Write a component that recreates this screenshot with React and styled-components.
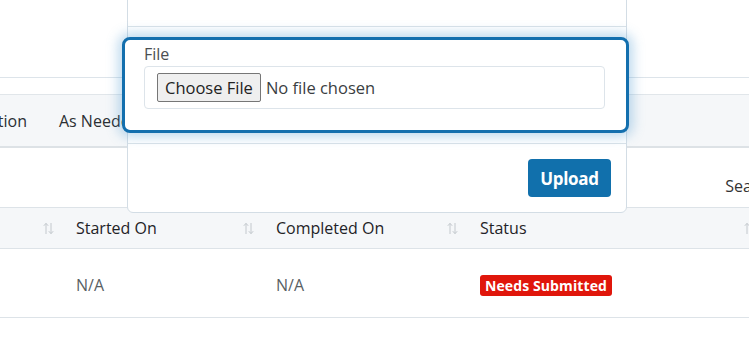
import React from "react";
import styled, { createGlobalStyle } from "styled-components";

const GlobalStyle = createGlobalStyle`
  html, body { margin: 0; padding: 0; background: #fff; }
  body { font-family: "Open Sans", "Liberation Sans", sans-serif; color: #212529; overflow: hidden; }
  * { box-sizing: border-box; }
`;

const Page = styled.div`
  position: relative;
  width: 749px;
  height: 340px;
  overflow: hidden;
  background: #fff;
`;

const PageHeader = styled.div`
  height: 78px;
  border-bottom: 1px solid #dde4ea;
`;

const TabBar = styled.div`
  margin-top: 16px;
  height: 54px;
  display: flex;
  align-items: center;
  background: #f5f7f9;
  border-top: 1px solid #e1e6ea;
  border-bottom: 2px solid #dde2e6;
`;

const TabList = styled.div`
  display: flex;
  margin-left: -36px;
`;

const Tab = styled.div`
  padding: 0 16px;
  font-size: 16px;
  font-weight: 500;
  color: #2b2f33;
  white-space: nowrap;
`;

const Toolbar = styled.div`
  height: 59px;
  display: flex;
  justify-content: flex-end;
  align-items: flex-end;
  padding-bottom: 2px;
  margin-right: -239px;
`;

const SearchLabel = styled.label`
  display: flex;
  align-items: center;
  gap: 8px;
  font-size: 16px;
  color: #333;
  line-height: 38px;
`;

const SearchInput = styled.input`
  width: 200px;
  height: 38px;
  border: 1px solid #dde3ea;
  border-radius: 4px;
`;

const Table = styled.table`
  width: 765px;
  table-layout: fixed;
  border-collapse: collapse;
`;

const HeadRow = styled.tr`
  background: #f5f7f9;
  border-top: 1px solid #dde3e8;
  border-bottom: 1px solid #dde3e8;
`;

const HeadCell = styled.th`
  height: 41px;
  padding: 0 10px 0 12px;
  text-align: left;
  font-size: 16px;
  font-weight: 500;
  color: #1f2327;
  white-space: nowrap;
`;

const HeadInner = styled.div`
  display: flex;
  align-items: center;
`;

const SortIcon = styled.svg`
  margin-left: auto;
  flex: none;
`;

const BodyRow = styled.tr`
  border-bottom: 1px solid #dde3e8;
`;

const Cell = styled.td`
  height: 69px;
  padding: 4px 12px 0;
  font-size: 16px;
  font-weight: 400;
  color: #5a5f64;
  white-space: nowrap;
`;

const Badge = styled.span`
  display: inline-block;
  padding: 0 5px;
  height: 21px;
  line-height: 21px;
  border-radius: 3px;
  background: #e0160b;
  color: #fff;
  font-size: 14px;
  font-weight: 700;
  letter-spacing: 0.1px;
`;

const Modal = styled.div`
  position: absolute;
  left: 127px;
  top: -37px;
  width: 500px;
  background: #fff;
  border: 1px solid #d3dde5;
  border-radius: 6px;
`;

const ModalHeader = styled.div`
  display: flex;
  align-items: flex-start;
  padding: 8px 16px 24px;
  border-bottom: 1px solid #dbe3e9;
`;

const ModalTitle = styled.h5`
  margin: 0;
  font-size: 20px;
  line-height: 30px;
  font-weight: 500;
  color: #212529;
`;

const Close = styled.span`
  margin-left: auto;
  margin-right: 4px;
  font-size: 24px;
  line-height: 30px;
  color: #c4c8cc;
`;

const ModalBody = styled.div`
  padding: 10px 0;
`;

const Highlight = styled.div`
  margin: 0 -3px 0 -6px;
  padding: 3px 21px 21px 19px;
  border: 3px solid #136fae;
  border-radius: 8px;
  background: #fff;
  box-shadow: 0 0 12px 4px rgba(70, 150, 205, 0.35);
  position: relative;
`;

const FieldLabel = styled.label`
  display: block;
  font-size: 16px;
  line-height: 22px;
  margin-bottom: 1px;
  color: #4a4e52;
`;

const FileBox = styled.div`
  height: 43px;
  display: flex;
  align-items: center;
  padding: 0 12px;
  border: 1px solid #dde4ea;
  border-radius: 4px;
`;

const FileInput = styled.input`
  font-family: "Open Sans", "Liberation Sans", sans-serif;
  font-size: 16.5px;
  color: #3a3e42;
  &::file-selector-button {
    font-family: inherit;
    font-size: 16.5px;
    color: #222;
    height: 29px;
    padding: 0 7px;
    margin-right: 5px;
    background: #efefef;
    border: 1px solid #767676;
    border-radius: 2px;
  }
`;

const ModalFooter = styled.div`
  display: flex;
  justify-content: flex-end;
  padding: 15px;
  border-top: 1px solid #dbe3e9;
`;

const UploadButton = styled.button`
  height: 38px;
  width: 83px;
  border: none;
  border-radius: 4px;
  background: #1170ac;
  color: #fff;
  font-family: "Open Sans", "Liberation Sans", sans-serif;
  font-size: 17px;
  font-weight: 700;
  letter-spacing: -0.3px;
`;

const Sort = () => (
  <SortIcon width="11" height="13" viewBox="0 0 11 13" fill="none" stroke="#c3c8cd" strokeWidth="1">
    <path d="M3 12V1.5M0.8 3.8L3 1.3L5.2 3.8" />
    <path d="M8 1v10.5M5.8 9.2L8 11.7L10.2 9.2" />
  </SortIcon>
);

const columns = [
  { label: "", width: 64 },
  { label: "Started On", width: 200 },
  { label: "Completed On", width: 204 },
  { label: "Status", width: 297 },
];

export default function App() {
  return (
    <>
      <GlobalStyle />
      <Page>
        <PageHeader />
        <TabBar>
          <TabList>
            <Tab>Action</Tab>
            <Tab>As Needed</Tab>
          </TabList>
        </TabBar>
        <Toolbar>
          <SearchLabel>
            Search:
            <SearchInput type="search" />
          </SearchLabel>
        </Toolbar>
        <Table>
          <colgroup>
            {columns.map((c, i) => (
              <col key={i} style={{ width: c.width }} />
            ))}
          </colgroup>
          <thead>
            <HeadRow>
              {columns.map((c, i) => (
                <HeadCell key={i}>
                  <HeadInner>
                    {c.label}
                    <Sort />
                  </HeadInner>
                </HeadCell>
              ))}
            </HeadRow>
          </thead>
          <tbody>
            <BodyRow>
              <Cell />
              <Cell>N/A</Cell>
              <Cell>N/A</Cell>
              <Cell>
                <Badge>Needs Submitted</Badge>
              </Cell>
            </BodyRow>
          </tbody>
        </Table>

        <Modal>
          <ModalHeader>
            <ModalTitle>Upload Document</ModalTitle>
            <Close>×</Close>
          </ModalHeader>
          <ModalBody>
            <Highlight>
              <FieldLabel htmlFor="file">File</FieldLabel>
              <FileBox>
                <FileInput id="file" type="file" />
              </FileBox>
            </Highlight>
          </ModalBody>
          <ModalFooter>
            <UploadButton>Upload</UploadButton>
          </ModalFooter>
        </Modal>
      </Page>
    </>
  );
}
